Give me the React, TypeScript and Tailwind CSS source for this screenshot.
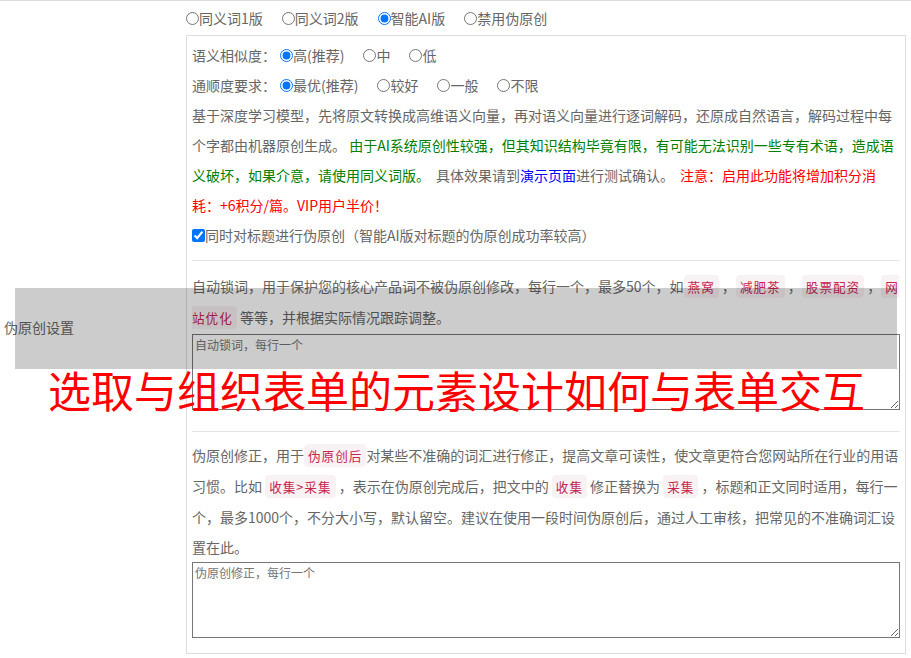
import React from "react";

const Code = ({ children }: { children: React.ReactNode }) => (
  <code className="bg-[#f9f2f4] text-[#c7254e] rounded-[4px] px-[4px] py-[2px] text-[12.6px] tracking-[1px] [font-family:'Noto_Sans_CJK_SC',sans-serif]">
    {children}
  </code>
);

const Radio = ({
  name,
  label,
  checked,
}: {
  name: string;
  label: string;
  checked?: boolean;
}) => (
  <label className="inline-flex items-center">
    <input
      type="radio"
      name={name}
      defaultChecked={checked}
      className="m-0 w-[13px] h-[13px]"
    />
    <span>{label}</span>
  </label>
);

const Gap = () => <span className="inline-block w-[6px]" />;

export default function App() {
  return (
    <div className="relative w-[911px] min-h-[658px] bg-white text-[14px] text-[#666] [font-family:'Noto_Sans_CJK_SC',sans-serif]">
      <div className="flex border-t border-[#ddd]">
        <div className="w-[186px] shrink-0 flex items-center pl-[4px] pb-[4px]">伪原创设置</div>
        <div className="flex-1 pt-[2px] pb-[4px]">
          <div className="h-[30px] flex items-center gap-[19px]">
            <Radio name="ver" label="同义词1版" />
            <Radio name="ver" label="同义词2版" />
            <Radio name="ver" label="智能AI版" checked />
            <Radio name="ver" label="禁用伪原创" />
          </div>
          <div className="mt-[2px] w-[720px] border border-[#ddd] pt-[4px] pb-[15px] px-[5px]">
            <div className="h-[30px] flex items-center">
              <span>语义相似度：</span>
              <div className="ml-[4px] flex items-center gap-[19px]">
                <Radio name="sim" label="高(推荐)" checked />
                <Radio name="sim" label="中" />
                <Radio name="sim" label="低" />
              </div>
            </div>
            <div className="h-[30px] flex items-center">
              <span>通顺度要求：</span>
              <div className="ml-[4px] flex items-center gap-[19px]">
                <Radio name="flu" label="最优(推荐)" checked />
                <Radio name="flu" label="较好" />
                <Radio name="flu" label="一般" />
                <Radio name="flu" label="不限" />
              </div>
            </div>
            <p className="leading-[30px]">
              基于深度学习模型，先将原文转换成高维语义向量，再对语义向量进行逐词解码，还原成自然语言，解码过程中每个字都由机器原创生成。{" "}
              <span className="text-[#008000]">
                由于AI系统原创性较强，但其知识结构毕竟有限，有可能无法识别一些专有术语，造成语义破坏，如果介意，请使用同义词版。
              </span>
              <Gap />
              具体效果请到<span className="text-[#0000ff]">演示页面</span>进行测试确认。
              <Gap />
              <span className="text-[#ff0000]">注意：启用此功能将增加积分消耗：+6积分/篇。VIP用户半价！</span>
            </p>
            <label className="h-[30px] flex items-center">
              <input type="checkbox" defaultChecked className="m-0 w-[13px] h-[13px]" />
              <span>同时对标题进行伪原创（智能AI版对标题的伪原创成功率较高）</span>
            </label>
            <div className="mt-[10px] mb-[10px] h-px bg-[#e5e5e5]" />
            <p className="leading-[30px]">
              自动锁词，用于保护您的核心产品词不被伪原创修改，每行一个，最多50个，如<Code>燕窝</Code> ，<Code>减肥茶</Code> ，<Code>股票配资</Code> ，<Code>网站优化</Code> 等等，并根据实际情况跟踪调整。
            </p>
            <textarea
              className="block mt-[1px] w-[708px] h-[76px] border border-[#767676] p-[2px] text-[12px] leading-[16px] placeholder:text-[#757575] resize-y"
              placeholder="自动锁词，每行一个"
            />
            <div className="mt-[21px] mb-[8px] h-px bg-[#e5e5e5]" />
            <p className="leading-[30px]">
              伪原创修正，用于<Code>伪原创后</Code>对某些不准确的词汇进行修正，提高文章可读性，使文章更符合您网站所在行业的用语习惯。比如 <Code>收集&gt;采集</Code> ，表示在伪原创完成后，把文中的 <Code>收集</Code> 修正替换为 <Code>采集</Code> ，标题和正文同时适用，每行一个，最多1000个，不分大小写，默认留空。建议在使用一段时间伪原创后，通过人工审核，把常见的不准确词汇设置在此。
            </p>
            <textarea
              className="block mt-0 w-[708px] h-[76px] border border-[#767676] p-[2px] text-[12px] leading-[16px] placeholder:text-[#757575] resize-y"
              placeholder="伪原创修正，每行一个"
            />
          </div>
        </div>
      </div>
      <div className="absolute left-[15px] top-[288px] w-[882px] h-[81px] bg-black/20" />
      <div className="absolute left-[48px] top-[368px] text-[43px] leading-none text-[#ff0000] whitespace-nowrap">
        选取与组织表单的元素设计如何与表单交互
      </div>
    </div>
  );
}
